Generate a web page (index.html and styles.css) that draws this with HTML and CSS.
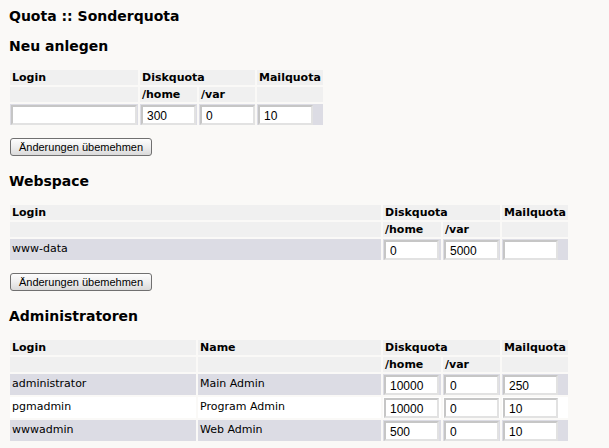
FILE: index.html
```html
<!DOCTYPE html>
<html>
<head>
<meta charset="utf-8">
<link rel="stylesheet" href="styles.css">
</head>
<body>
<h1 class="title">Quota :: Sonderquota</h1>

<h2 class="section first">Neu anlegen</h2>
<table class="quota">
  <tr class="head">
    <th class="w-login-new">Login</th>
    <th colspan="2">Diskquota</th>
    <th class="w-mail-new">Mailquota</th>
  </tr>
  <tr class="head">
    <th></th>
    <th class="w-home-new">/home</th>
    <th class="w-var-new">/var</th>
    <th></th>
  </tr>
  <tr class="row odd">
    <td class="f"><input class="in in-login" type="text" value=""></td>
    <td class="f"><input class="in" type="text" value="300"></td>
    <td class="f"><input class="in" type="text" value="0"></td>
    <td class="f"><input class="in" type="text" value="10"></td>
  </tr>
</table>
<div class="actions"><button class="btn" type="button">Änderungen übemehmen</button></div>

<h2 class="section">Webspace</h2>
<table class="quota">
  <tr class="head">
    <th class="w-login-web">Login</th>
    <th colspan="2">Diskquota</th>
    <th class="w-mail">Mailquota</th>
  </tr>
  <tr class="head">
    <th></th>
    <th class="w-home">/home</th>
    <th class="w-var">/var</th>
    <th></th>
  </tr>
  <tr class="row odd">
    <td class="t">www-data</td>
    <td class="f"><input class="in" type="text" value="0"></td>
    <td class="f"><input class="in" type="text" value="5000"></td>
    <td class="f"><input class="in" type="text" value=""></td>
  </tr>
</table>
<div class="actions"><button class="btn" type="button">Änderungen übemehmen</button></div>

<h2 class="section">Administratoren</h2>
<table class="quota">
  <tr class="head">
    <th class="w-login-adm">Login</th>
    <th class="w-name">Name</th>
    <th colspan="2">Diskquota</th>
    <th class="w-mail">Mailquota</th>
  </tr>
  <tr class="head">
    <th></th>
    <th></th>
    <th class="w-home">/home</th>
    <th class="w-var">/var</th>
    <th></th>
  </tr>
  <tr class="row odd">
    <td class="t">administrator</td>
    <td class="t">Main Admin</td>
    <td class="f"><input class="in" type="text" value="10000"></td>
    <td class="f"><input class="in" type="text" value="0"></td>
    <td class="f"><input class="in" type="text" value="250"></td>
  </tr>
  <tr class="row even">
    <td class="t">pgmadmin</td>
    <td class="t">Program Admin</td>
    <td class="f"><input class="in" type="text" value="10000"></td>
    <td class="f"><input class="in" type="text" value="0"></td>
    <td class="f"><input class="in" type="text" value="10"></td>
  </tr>
  <tr class="row odd">
    <td class="t">wwwadmin</td>
    <td class="t">Web Admin</td>
    <td class="f"><input class="in" type="text" value="500"></td>
    <td class="f"><input class="in" type="text" value="0"></td>
    <td class="f"><input class="in" type="text" value="10"></td>
  </tr>
</table>
</body>
</html>
```

FILE: styles.css
```css
html, body {
  background: #faf9f7;
}
body {
  margin: 8px;
  font-family: "DejaVu Sans", Verdana, sans-serif;
  font-size: 11px;
  color: #000;
}
.title {
  font-size: 14px;
  font-weight: bold;
  margin: 0 0 0 1px;
  line-height: 17px;
}
.section {
  font-size: 14px;
  font-weight: bold;
  margin: 16px 0 15px 1px;
  line-height: 18px;
}
.section.first {
  margin-top: 12px;
}
.quota {
  border-collapse: separate;
  border-spacing: 2px;
  margin: -2px 0 0 0;
}
.quota th {
  background: #f0f0f0;
  text-align: left;
  font-weight: bold;
  height: 15px;
  padding: 0 2px;
  line-height: 15px;
  white-space: nowrap;
}
.quota td {
  vertical-align: top;
  line-height: 15px;
  white-space: nowrap;
}
.quota td.f {
  padding: 1px 0 0 1px;
}
.quota td.t {
  padding: 2px 2px 0 2px;
}
.row.odd td { background: #dcdce4; }
.row.even td { background: #ffffff; }

.w-login-new { width: 124px; }
.w-home-new { width: 53px; }
.w-var-new { width: 52px; }
.w-mail-new { width: 62px; }

.w-login-web { width: 367px; }
.w-login-adm { width: 182px; }
.w-name { width: 179px; }
.w-home { width: 54px; }
.w-var { width: 53px; }
.w-mail { width: 59px; }

.in {
  box-sizing: border-box;
  width: 55px;
  height: 20px;
  margin: 0;
  padding: 1px 3px 0 4px;
  font-family: "Liberation Sans", Arial, sans-serif;
  font-size: 12px;
  background: #fff;
  border: 2px solid;
  border-color: #c6c6c6 #e2e2e2 #e2e2e2 #c6c6c6;
  display: block;
  outline: none;
  color: #000;
}
.in-login { width: 126px; }
.actions {
  margin: 11px 0 0 2px;
}
.btn {
  font-family: "Liberation Sans", Arial, sans-serif;
  font-size: 11px;
  height: 18px;
  width: 142px;
  padding: 0;
  border: 1px solid #707070;
  border-radius: 3px;
  background: linear-gradient(#fdfdfd, #eeeeee 50%, #dadada);
  color: #000;
  display: block;
}
```
